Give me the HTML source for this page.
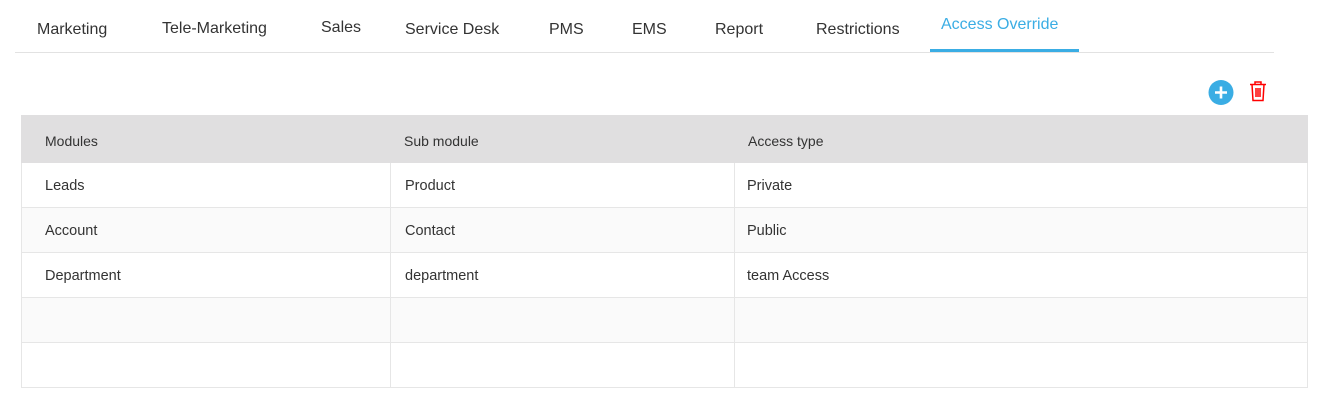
<!DOCTYPE html>
<html><head><style>
body{margin:0;width:1326px;height:420px;background:#fff;font-family:"Liberation Sans",sans-serif;color:#333;position:relative;overflow:hidden}
.t{position:absolute;font-size:16px;white-space:nowrap}
.line{position:absolute;left:15px;width:1259px;top:52px;height:1px;background:#e2e2e2}
.ul{position:absolute;left:930px;width:149px;top:49px;height:3px;background:#3aade4}
table{position:absolute;left:21px;top:115px;width:1287px;border-collapse:collapse;font-size:14.5px;table-layout:fixed}
td{border:1px solid #e6e6e6;height:45px;padding:1px 0 0 23px;vertical-align:middle;box-sizing:border-box}
tr.h td{background:#e0dfe0;height:47px;border-color:#e0dfe0;font-size:14px;padding-top:3px}
tr.a td{background:#fafafa}
</style></head><body>
<div class="t" style="left:37px;top:21px">Marketing</div>
<div class="t" style="left:162px;top:20px">Tele-Marketing</div>
<div class="t" style="left:321px;top:19px">Sales</div>
<div class="t" style="left:405px;top:21px">Service Desk</div>
<div class="t" style="left:549px;top:21px">PMS</div>
<div class="t" style="left:632px;top:21px">EMS</div>
<div class="t" style="left:715px;top:21px">Report</div>
<div class="t" style="left:816px;top:21px">Restrictions</div>
<div class="t" style="left:941px;top:16px;color:#3aade4">Access Override</div>
<div class="line"></div><div class="ul"></div>
<svg style="position:absolute;left:1208px;top:80px" width="26" height="26" viewBox="0 0 26 26"><circle cx="13" cy="12.5" r="12.5" fill="#3aade4"/><path d="M13 6.5v12M7 12.5h12" stroke="#fff" stroke-width="2.6"/></svg>
<svg style="position:absolute;left:1248px;top:80px" width="20" height="22" viewBox="0 0 20 22" fill="none" stroke="#f00" stroke-width="1.5"><path d="M2 4.5h16M7 4.5V2h6v2.5M4 4.5l1 16h10l1-16M8 8v9M10 8v9M12 8v9"/></svg>
<table>
<colgroup><col style="width:369px"><col style="width:344px"><col></colgroup>
<tr class="h"><td>Modules</td><td style="padding-left:13px">Sub module</td><td style="padding-left:13px">Access type</td></tr>
<tr><td>Leads</td><td style="padding-left:14px">Product</td><td style="padding-left:12px">Private</td></tr>
<tr class="a"><td>Account</td><td style="padding-left:14px">Contact</td><td style="padding-left:12px">Public</td></tr>
<tr><td>Department</td><td style="padding-left:14px">department</td><td style="padding-left:12px">team Access</td></tr>
<tr class="a"><td></td><td></td><td></td></tr>
<tr><td></td><td></td><td></td></tr>
</table>
</body></html>
